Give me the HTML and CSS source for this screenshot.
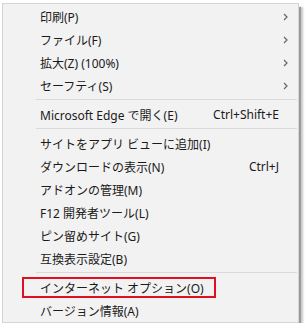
FILE: index.html
```html
<!DOCTYPE html>
<html lang="ja">

<head>
    <meta charset="utf-8">
    <meta name="viewport" content="width=device-width, initial-scale=1.0">
    <title>メニュー</title>
    <link rel="stylesheet" href="styles.css">
</head>

<body>
    <ul class="menu">
        <li class="item">印刷(P)<svg class="pil" viewBox="0 0 5 8"><polyline points="1,1 4,4 1,7" /></svg></li>
        <li class="item">ファイル(F)<svg class="pil" viewBox="0 0 5 8"><polyline points="1,1 4,4 1,7" /></svg></li>
        <li class="item">拡大(Z) (100%)<svg class="pil" viewBox="0 0 5 8"><polyline points="1,1 4,4 1,7" /></svg></li>
        <li class="item">セーフティ(S)<svg class="pil" viewBox="0 0 5 8"><polyline points="1,1 4,4 1,7" /></svg></li>
        <li class="skille"></li>
        <li class="item">Microsoft Edge で開く(E)<span class="genvej">Ctrl+Shift+E</span></li>
        <li class="skille"></li>
        <li class="item">サイトをアプリ ビューに追加(I)</li>
        <li class="item">ダウンロードの表示(N)<span class="genvej">Ctrl+J</span></li>
        <li class="item">アドオンの管理(M)</li>
        <li class="item">F12 開発者ツール(L)</li>
        <li class="item">ピン留めサイト(G)</li>
        <li class="item">互換表示設定(B)</li>
        <li class="skille"></li>
        <li class="item markeret">インターネット オプション(O)<span class="ramme"></span></li>
        <li class="item">バージョン情報(A)</li>
    </ul>
</body></html>
```

FILE: styles.css
```css
body {
    margin: 0;
    background-color: #ffffff;
    font-family: "Noto Sans", "Noto Sans CJK JP", sans-serif;
}

.menu {
    list-style: none;
    margin: 3px 0 0 2px;
    padding: 1px 0 0 0;
    width: 297px;
    height: 320px;
    box-sizing: border-box;
    background-color: #f2f2f2;
    border: 1px solid #d4d4d4;
    box-shadow: 3px 3px 0 -1px #9a9a9a, 4px 4px 2px #c8c8c8;
}

.item {
    position: relative;
    display: flex;
    align-items: center;
    height: 23px;
    padding: 0 19px 0 37px;
    font-size: 12px;
    color: #1a1a1a;
}

.genvej {
    margin-left: auto;
}

.pil {
    margin-left: auto;
    margin-right: -9px;
    width: 5px;
    height: 8px;
}

.pil polyline {
    fill: none;
    stroke: #666666;
    stroke-width: 1.2;
}

.skille {
    height: 1px;
    margin: 2px 1px 3px 33px;
    background-color: #d9d9d9;
}

/* rød markering over menupunktet */
.ramme {
    position: absolute;
    left: 19px;
    top: 1px;
    width: 194px;
    height: 21px;
    border: 2px solid #e01020;
    box-sizing: border-box;
}
```
